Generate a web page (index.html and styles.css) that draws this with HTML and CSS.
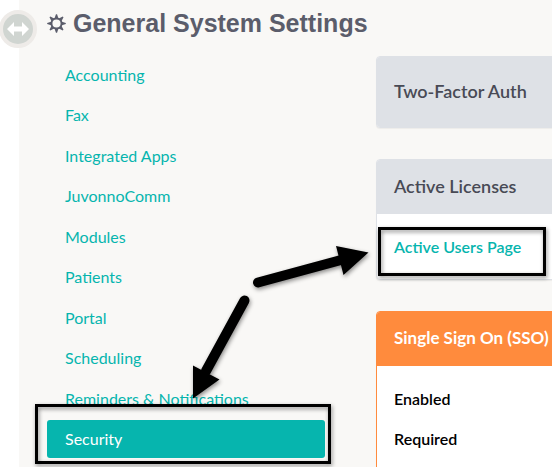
FILE: index.html
```html
<!DOCTYPE html>
<html lang="en">
<head>
<meta charset="utf-8">
<title>General System Settings</title>
<link rel="stylesheet" href="styles.css">
</head>
<body>
<main class="page">
  <header class="page-header">
    <svg class="gear" viewBox="0 0 20 20" aria-hidden="true">
      <circle cx="10" cy="10" r="5.300" fill="none" stroke="currentColor" stroke-width="2"/>
      <g fill="currentColor">
        <path id="tooth" d="M7.800 5L9.400 .2h1.200L12.200 5z"/>
        <use href="#tooth" transform="rotate(45 10 10)"/>
        <use href="#tooth" transform="rotate(90 10 10)"/>
        <use href="#tooth" transform="rotate(135 10 10)"/>
        <use href="#tooth" transform="rotate(180 10 10)"/>
        <use href="#tooth" transform="rotate(225 10 10)"/>
        <use href="#tooth" transform="rotate(270 10 10)"/>
        <use href="#tooth" transform="rotate(315 10 10)"/>
      </g>
    </svg>
    <h1>General System Settings</h1>
  </header>
  <div class="columns">
    <nav class="menu" aria-label="Settings">
      <a href="#">Accounting</a>
      <a href="#">Fax</a>
      <a href="#">Integrated Apps</a>
      <a href="#">JuvonnoComm</a>
      <a href="#">Modules</a>
      <a href="#">Patients</a>
      <a href="#">Portal</a>
      <a href="#">Scheduling</a>
      <a href="#">Reminders &amp; Notifications</a>
      <a href="#" class="active" aria-current="page">Security</a>
    </nav>
    <div class="cards">
      <section class="card card-single"><h2>Two-Factor Auth</h2></section>
      <section class="card">
        <h2>Active Licenses</h2>
        <div class="card-body"><a href="#">Active Users Page</a></div>
      </section>
      <section class="card card-accent">
        <h2>Single Sign On (SSO)</h2>
        <dl class="card-body">
          <dt>Enabled</dt>
          <dt>Required</dt>
        </dl>
      </section>
    </div>
  </div>
</main>
<button class="toggle" type="button" aria-label="Toggle sidebar">
  <svg viewBox="0 0 22 14" aria-hidden="true"><path d="M0 7l7-7v4.500h8V0l7 7-7 7V9.500H7V14z" fill="#fff"/></svg>
</button>
<svg class="annotations" viewBox="0 0 552 467" aria-hidden="true">
  <g fill="none" stroke="#000" stroke-width="3">
    <rect x="379.500" y="228.500" width="165" height="46"/>
    <rect x="36.500" y="405.500" width="293" height="57"/>
  </g>
  <g stroke="#000" stroke-width="10" stroke-linecap="round">
    <path d="M258 282.500L341 260"/>
    <path d="M244.500 300.500L206 371"/>
  </g>
  <path d="M368.500 252.500L336 246l7.500 29zM193 398.500V365.500l26.500 14z"/>
</svg>
</body>
</html>
```
FILE: styles.css
```css
* { box-sizing: border-box; }

body {
  margin: 0;
  background: #fff;
  color: #000;
  font: 16px/24px Lato, sans-serif;
  overflow: hidden;
}

.page {
  min-height: 100vh;
  margin-left: 19px;
  padding: 8px 0 0 28px;
  background: #f9f8f6;
}

.page-header {
  display: flex;
  align-items: center;
  gap: 7px;
  height: 30px;
  color: #5b5d6b;
}

.gear {
  width: 19px;
  height: 19px;
}

h1 {
  margin: 0;
  font: bold 25px/30px "Liberation Sans", sans-serif;
}

.columns {
  display: grid;
  grid-template-columns: 278px 1fr;
  align-items: start;
  column-gap: 51px;
  margin-top: 18px;
}

.menu {
  display: flex;
  flex-direction: column;
  justify-content: space-between;
  min-height: 402px;
}

.menu a {
  padding: 7px 18px;
  border-radius: 3px;
  color: #06b5ae;
  text-decoration: none;
}

.menu .active {
  background: #06b5ae;
  color: #fff;
}

.cards {
  display: grid;
  gap: 31px;
  margin-right: -24px;
}

.card {
  border: 1px solid #dee1e6;
  border-radius: 4px;
  background: #fff;
  box-shadow: 0 1px 1px rgba(0, 0, 0, .05);
  overflow: hidden;
}

.card h2 {
  margin: 0;
  padding: 14px 17px 16px;
  background: #dee1e6;
  color: #484a55;
  font-size: 18px;
  font-weight: 600;
  line-height: 24px;
  white-space: nowrap;
}

.card-single h2 { padding: 22px 17px 24px; }

.card-body {
  margin: 0;
  padding: 21px 17px 20px;
  font-weight: 600;
}

.card-body a {
  color: #06b5ae;
  text-decoration: none;
}

.card-accent { border-color: #ff8b3d; }

.card.card-accent h2 {
  background: #ff8b3d;
  color: #fff;
  font-size: 17px;
  font-weight: 700;
}

.card-accent .card-body {
  display: grid;
  gap: 16px;
}

.toggle {
  position: absolute;
  top: 10px;
  left: -1px;
  display: grid;
  place-items: center;
  width: 38px;
  height: 38px;
  padding: 0;
  border: 4px solid #eeebe8;
  border-radius: 50%;
  background: #d0d5d1;
}

.toggle svg {
  width: 22px;
  height: 14px;
}

.annotations {
  position: absolute;
  top: 0;
  left: 0;
  width: 552px;
  height: 467px;
  pointer-events: none;
  filter: drop-shadow(1px 2px 2px rgba(0, 0, 0, .45));
}
```
